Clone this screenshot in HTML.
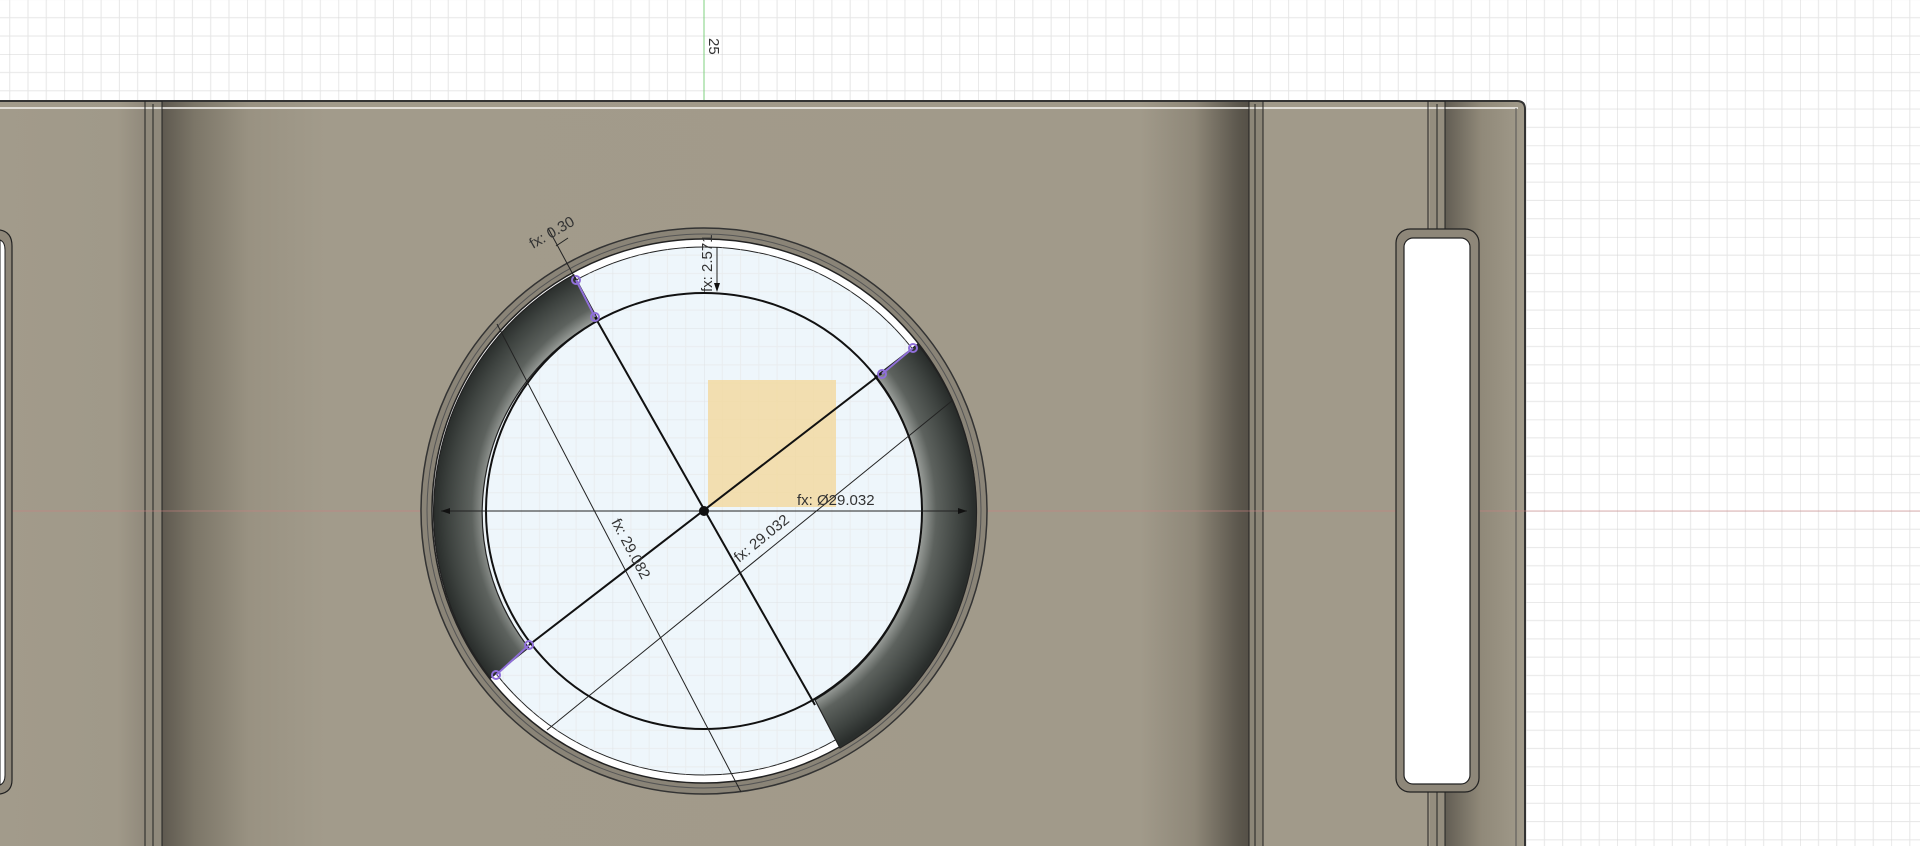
<!DOCTYPE html>
<html><head><meta charset="utf-8"><style>
html,body{margin:0;padding:0;background:#fff;overflow:hidden}
svg{display:block}
text{font-family:"Liberation Sans",sans-serif;fill:#333;font-size:15px}
</style></head><body>
<svg width="1920" height="846" viewBox="0 0 1920 846" xmlns="http://www.w3.org/2000/svg">
<defs>
<pattern id="g" x="704" y="511" width="91.35" height="91.35" patternUnits="userSpaceOnUse">
<path d="M18.27 0V91.35M36.54 0V91.35M54.81 0V91.35M73.08 0V91.35M0 18.27H91.35M0 36.54H91.35M0 54.81H91.35M0 73.08H91.35" stroke="#e6e6e6" stroke-width="1"/>
<path d="M0 0V91.35M0 0H91.35" stroke="#d4d4d4" stroke-width="1"/>
</pattern>
<linearGradient id="main" x1="162" x2="1249" gradientUnits="userSpaceOnUse">
<stop offset="0" stop-color="#5e594f"/><stop offset="0.03" stop-color="#7c7668"/><stop offset="0.08" stop-color="#999282"/><stop offset="0.15" stop-color="#a29b8b"/>
<stop offset="0.9" stop-color="#a19a8a"/><stop offset="0.95" stop-color="#8e8778"/><stop offset="0.99" stop-color="#5c574d"/><stop offset="1" stop-color="#555047"/>
</linearGradient>
<linearGradient id="rp" x1="1445" x2="1525" gradientUnits="userSpaceOnUse">
<stop offset="0" stop-color="#625d53"/><stop offset="0.45" stop-color="#908979"/><stop offset="1" stop-color="#a29b8b"/>
</linearGradient>
<linearGradient id="lp" x1="0" x2="147" gradientUnits="userSpaceOnUse">
<stop offset="0" stop-color="#a29b8b"/><stop offset="0.8" stop-color="#a09989"/><stop offset="1" stop-color="#8f887a"/>
</linearGradient>
<radialGradient id="wall" cx="704" cy="511" r="270" gradientUnits="userSpaceOnUse">
<stop offset="0.8" stop-color="#a3a7a3"/><stop offset="0.86" stop-color="#5d625e"/><stop offset="0.95" stop-color="#3d423f"/><stop offset="1" stop-color="#2a2e2c"/>
</radialGradient>
</defs>
<rect width="1920" height="846" fill="#fff"/>
<rect width="1920" height="846" fill="url(#g)"/>
<line x1="704" y1="0" x2="704" y2="846" stroke="#7fd17f" stroke-width="1"/>
<text x="0" y="0" transform="translate(709,38) rotate(90)" font-size="13">25</text>
<!-- plate -->
<rect x="0" y="100" width="147" height="746" fill="url(#lp)"/>
<rect x="145" y="100" width="17" height="746" fill="#8f897b"/>
<rect x="162" y="100" width="1087" height="746" fill="url(#main)"/>
<rect x="1249" y="100" width="14" height="746" fill="#8c8677"/>
<rect x="1263" y="100" width="167" height="746" fill="#a19a8a"/>
<rect x="1430" y="100" width="15" height="746" fill="#948d7e"/>
<path d="M1445 100H1517Q1525 100 1525 108V846H1445Z" fill="url(#rp)"/>
<path d="M0 101H1517Q1525 101 1525 109V846" fill="none" stroke="#333" stroke-width="2"/>
<line x1="0" y1="108" x2="1518" y2="108" stroke="#f4f2ee" stroke-width="1.5"/>
<line x1="1516" y1="108" x2="1516" y2="846" stroke="#555" stroke-width="1"/>
<g stroke="#222" stroke-width="1">
<line x1="145" y1="101" x2="145" y2="846"/><line x1="153" y1="104" x2="153" y2="846"/><line x1="162" y1="101" x2="162" y2="846"/>
<line x1="1249" y1="101" x2="1249" y2="846"/><line x1="1255" y1="104" x2="1255" y2="846"/><line x1="1263" y1="101" x2="1263" y2="846"/>
<line x1="1428" y1="101" x2="1428" y2="846"/><line x1="1437" y1="104" x2="1437" y2="846"/><line x1="1445" y1="101" x2="1445" y2="846"/>
</g>
<line x1="0" y1="511" x2="1920" y2="511" stroke="#c98080" stroke-width="1" opacity="0.6"/>
<!-- right slot -->
<rect x="1396" y="229" width="83" height="563" rx="14" fill="#8e8779" stroke="#222" stroke-width="1.2"/>
<rect x="1404" y="238" width="66" height="546" rx="9" fill="#fff" stroke="#222" stroke-width="1.2"/>
<!-- left slot -->
<path d="M0 230Q12 232 12 246V780Q12 792 0 794" fill="#8e8779" stroke="#222" stroke-width="1.2"/>
<path d="M0 240Q5 242 5 250V775Q5 783 0 785Z" fill="#fff" stroke="#222" stroke-width="1"/>
<!-- circle -->
<circle cx="704" cy="511" r="283" fill="#8a8477" stroke="#333" stroke-width="1.5"/>
<circle cx="704" cy="511" r="277" fill="none" stroke="#555" stroke-width="1"/>
<circle cx="704" cy="511" r="272" fill="#fff" stroke="#222" stroke-width="1.5"/>
<circle cx="704" cy="511" r="264" fill="#eef6fb" stroke="#222" stroke-width="1"/>
<clipPath id="cc"><circle cx="704" cy="511" r="264"/></clipPath>
<g clip-path="url(#cc)"><rect x="420" y="220" width="570" height="580" fill="url(#g)" opacity="0.6"/>
<line x1="0" y1="511" x2="1920" y2="511" stroke="#c98080" stroke-width="1" opacity="0.6"/></g>
<!-- walls -->
<path d="M573.8 274.8 A271 271 0 0 0 490.4 678.1 L528.7 647.7 A218 218 0 0 1 598.4 320.4 Z" fill="url(#wall)" stroke="#222" stroke-width="1.2"/>
<path d="M917.6 344.2 A271 271 0 0 1 840 748 L815 700 A218 218 0 0 0 875 377 Z" fill="url(#wall)" stroke="#222" stroke-width="1.2"/>
<circle cx="704" cy="511" r="218" fill="none" stroke="#111" stroke-width="2"/>
<!-- orange rect -->
<rect x="708" y="380" width="128" height="127" fill="#f2d9a2" opacity="0.85"/>
<!-- construction lines -->
<g stroke="#111" stroke-width="2">
<line x1="595" y1="317" x2="815" y2="705"/>
<line x1="882" y1="373" x2="529" y2="645"/>
</g>
<g stroke="#8f6fd8" stroke-width="2" fill="none">
<line x1="576" y1="280" x2="595" y2="317"/><circle cx="576" cy="280" r="4"/><circle cx="595" cy="317" r="4"/>
<line x1="913" y1="348" x2="882" y2="374"/><circle cx="913" cy="348" r="4"/><circle cx="882" cy="374" r="4"/>
<line x1="529" y1="645" x2="496" y2="675"/><circle cx="529" cy="645" r="4"/><circle cx="496" cy="675" r="4"/>
</g>
<g stroke="#222" stroke-width="1" fill="none">
<line x1="441" y1="511" x2="967" y2="511"/>
<line x1="497" y1="324" x2="741" y2="792"/>
<line x1="953" y1="400" x2="547" y2="730"/>
<line x1="717" y1="247" x2="717" y2="290"/>
<line x1="548" y1="228" x2="576" y2="280"/>
<line x1="556" y1="246" x2="568" y2="238"/>
</g>
<circle cx="704" cy="511" r="5" fill="#111"/>
<g fill="#111"><path d="M441 511l9-3v6z"/><path d="M967 511l-9-3v6z"/><path d="M717 292l-3-9h6z"/></g>
<text x="797" y="505">fx: Ø29.032</text>
<text transform="translate(739,563) rotate(-39)">fx: 29.032</text>
<text transform="translate(611,522) rotate(62)">fx: 29.082</text>
<text transform="translate(712,292) rotate(-90)">fx: 2.571</text>
<text transform="translate(533,249) rotate(-30)" font-size="14" fill="#555">fx: 0.30</text>
</svg>
</body></html>
